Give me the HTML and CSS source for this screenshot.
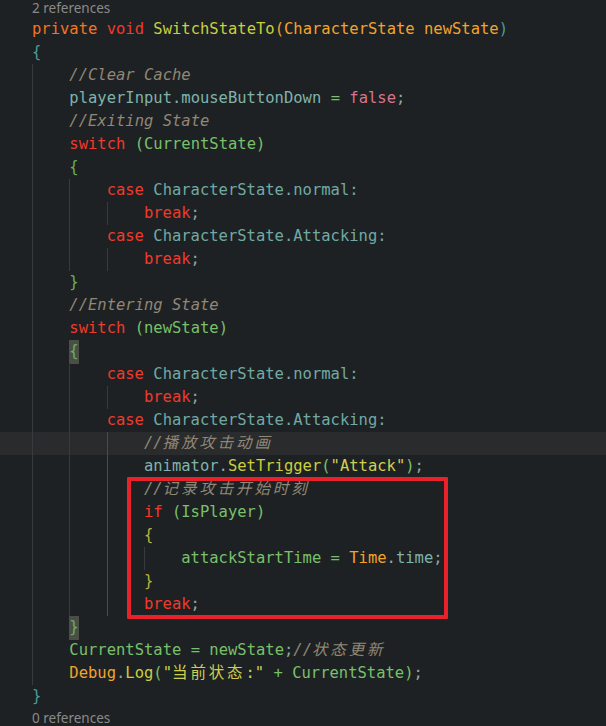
FILE: index.html
```html
<!DOCTYPE html>
<html>
<head>
<meta charset="utf-8">
<link rel="stylesheet" href="styles.css">
</head>
<body>
<div class="editor">
  <div class="lens lens-top">2 references</div>
  <div class="code">
    <div class="ln"><span class="k1">private</span> <span class="kw">void</span> <span class="fn">SwitchStateTo</span><span class="par">(CharacterState newState</span><span class="pt">)</span></div>
    <div class="ln"><span class="pt">{</span></div>
    <div class="ln"><span class="ind g"></span><span class="cm">//Clear Cache</span></div>
    <div class="ln"><span class="ind g"></span><span class="fld">playerInput.mouseButtonDown</span> <span class="op">=</span> <span class="lit">false</span><span class="pn">;</span></div>
    <div class="ln"><span class="ind g"></span><span class="cm">//Exiting State</span></div>
    <div class="ln"><span class="ind g"></span><span class="kw">switch</span> <span class="loc">(CurrentState)</span></div>
    <div class="ln"><span class="ind g"></span><span class="brg">{</span></div>
    <div class="ln"><span class="ind g"></span><span class="ind g"></span><span class="kw">case</span> <span class="enm">CharacterState.normal:</span></div>
    <div class="ln"><span class="ind g"></span><span class="ind g"></span><span class="ind g"></span><span class="kw">break</span><span class="pn">;</span></div>
    <div class="ln"><span class="ind g"></span><span class="ind g"></span><span class="kw">case</span> <span class="enm">CharacterState.Attacking:</span></div>
    <div class="ln"><span class="ind g"></span><span class="ind g"></span><span class="ind g"></span><span class="kw">break</span><span class="pn">;</span></div>
    <div class="ln"><span class="ind g"></span><span class="brg">}</span></div>
    <div class="ln"><span class="ind g"></span><span class="cm">//Entering State</span></div>
    <div class="ln"><span class="ind g"></span><span class="kw">switch</span> <span class="loc">(newState)</span></div>
    <div class="ln"><span class="ind g"></span><span class="brg hl">{</span></div>
    <div class="ln"><span class="ind g"></span><span class="ind g"></span><span class="kw">case</span> <span class="enm">CharacterState.normal:</span></div>
    <div class="ln"><span class="ind g"></span><span class="ind g"></span><span class="ind g"></span><span class="kw">break</span><span class="pn">;</span></div>
    <div class="ln"><span class="ind g"></span><span class="ind g"></span><span class="kw">case</span> <span class="enm">CharacterState.Attacking:</span></div>
    <div class="ln cur"><span class="ind g"></span><span class="ind g"></span><span class="ind ga"></span><span class="cm">//<span class="cjk">播放攻击动画</span></span></div>
    <div class="ln"><span class="ind g"></span><span class="ind g"></span><span class="ind ga"></span><span class="fld">animator</span><span class="pn">.</span><span class="fn">SetTrigger</span><span class="loc">(</span><span class="str">"Attack"</span><span class="loc">)</span><span class="pn">;</span></div>
    <div class="ln"><span class="ind g"></span><span class="ind g"></span><span class="ind ga"></span><span class="cm">//<span class="cjk">记录攻击开始时刻</span></span></div>
    <div class="ln"><span class="ind g"></span><span class="ind g"></span><span class="ind ga"></span><span class="kw">if</span> <span class="loc">(IsPlayer)</span></div>
    <div class="ln"><span class="ind g"></span><span class="ind g"></span><span class="ind ga"></span><span class="bry">{</span></div>
    <div class="ln"><span class="ind g"></span><span class="ind g"></span><span class="ind ga"></span><span class="ind g"></span><span class="loc">attackStartTime</span> <span class="op">=</span> <span class="ty">Time</span><span class="pn">.</span><span class="fld">time</span><span class="pn">;</span></div>
    <div class="ln"><span class="ind g"></span><span class="ind g"></span><span class="ind ga"></span><span class="bry">}</span></div>
    <div class="ln"><span class="ind g"></span><span class="ind g"></span><span class="ind ga"></span><span class="kw">break</span><span class="pn">;</span></div>
    <div class="ln"><span class="ind g"></span><span class="brg hl">}</span></div>
    <div class="ln"><span class="ind g"></span><span class="loc">CurrentState</span> <span class="op">=</span> <span class="loc">newState</span><span class="pn">;</span><span class="cm">//<span class="cjk">状态更新</span></span></div>
    <div class="ln"><span class="ind g"></span><span class="ty">Debug</span><span class="pn">.</span><span class="fn">Log</span><span class="loc">(</span><span class="str">"<span class="cjk">当前状态</span>:"</span> <span class="op">+</span> <span class="loc">CurrentState</span><span class="loc">)</span><span class="pn">;</span></div>
    <div class="ln"><span class="pt">}</span></div>
  </div>
  <div class="lens lens-bottom">0 references</div>
  <div class="mark"></div>
</div>
</body>
</html>
```

FILE: styles.css
```css
html, body {
  margin: 0;
  padding: 0;
  background: #1e2123;
}

.editor {
  position: relative;
  width: 606px;
  height: 726px;
  overflow: hidden;
  background: #1e2123;
}

.lens {
  font-family: "Noto Sans", "Open Sans", sans-serif;
  font-size: 13.5px;
  color: #8a8a8a;
  padding-left: 32px;
}

.lens-top {
  height: 18px;
  line-height: 17px;
}

.lens-bottom {
  height: 21px;
  line-height: 21px;
}

.code {
  font-family: "DejaVu Sans Mono", "Noto Sans CJK SC", monospace;
  font-size: 15.5px;
  color: #7fb3ac;
}

.ln {
  height: 23px;
  line-height: 23px;
  padding-left: 32px;
  white-space: pre;
}

.ln.cur {
  background: #292b2d;
}

.ind {
  display: inline-block;
  width: 4ch;
  height: 23px;
  vertical-align: top;
}

.g {
  box-shadow: inset 1px 0 0 #383b3d;
}

.ga {
  box-shadow: inset 1px 0 0 #4e4a45;
}

.cjk {
  letter-spacing: calc(2ch - 1em - 0.3px);
}

.k1 { color: #f5741f; }
.kw { color: #ef3a2c; }
.fn { color: #c9cf3e; }
.par { color: #f3a32b; }
.pt { color: #4b9c98; }
.cm { color: #918775; font-style: italic; }
.fld { color: #7fb3ac; }
.pn { color: #8fa8a4; }
.op { color: #74c267; }
.lit { color: #d7748c; }
.loc { color: #78c06a; }
.brg { color: #6aae5e; }
.enm { color: #71a9a4; }
.ty { color: #f0a42a; }
.str { color: #cdd050; }
.bry { color: #b6b43c; }

.hl {
  background: #4a4e47;
  display: inline-block;
  height: 24px;
}

.mark {
  position: absolute;
  left: 127px;
  top: 477px;
  width: 313px;
  height: 134px;
  border: 4.5px solid #e8212b;
  border-radius: 1px;
}
```
